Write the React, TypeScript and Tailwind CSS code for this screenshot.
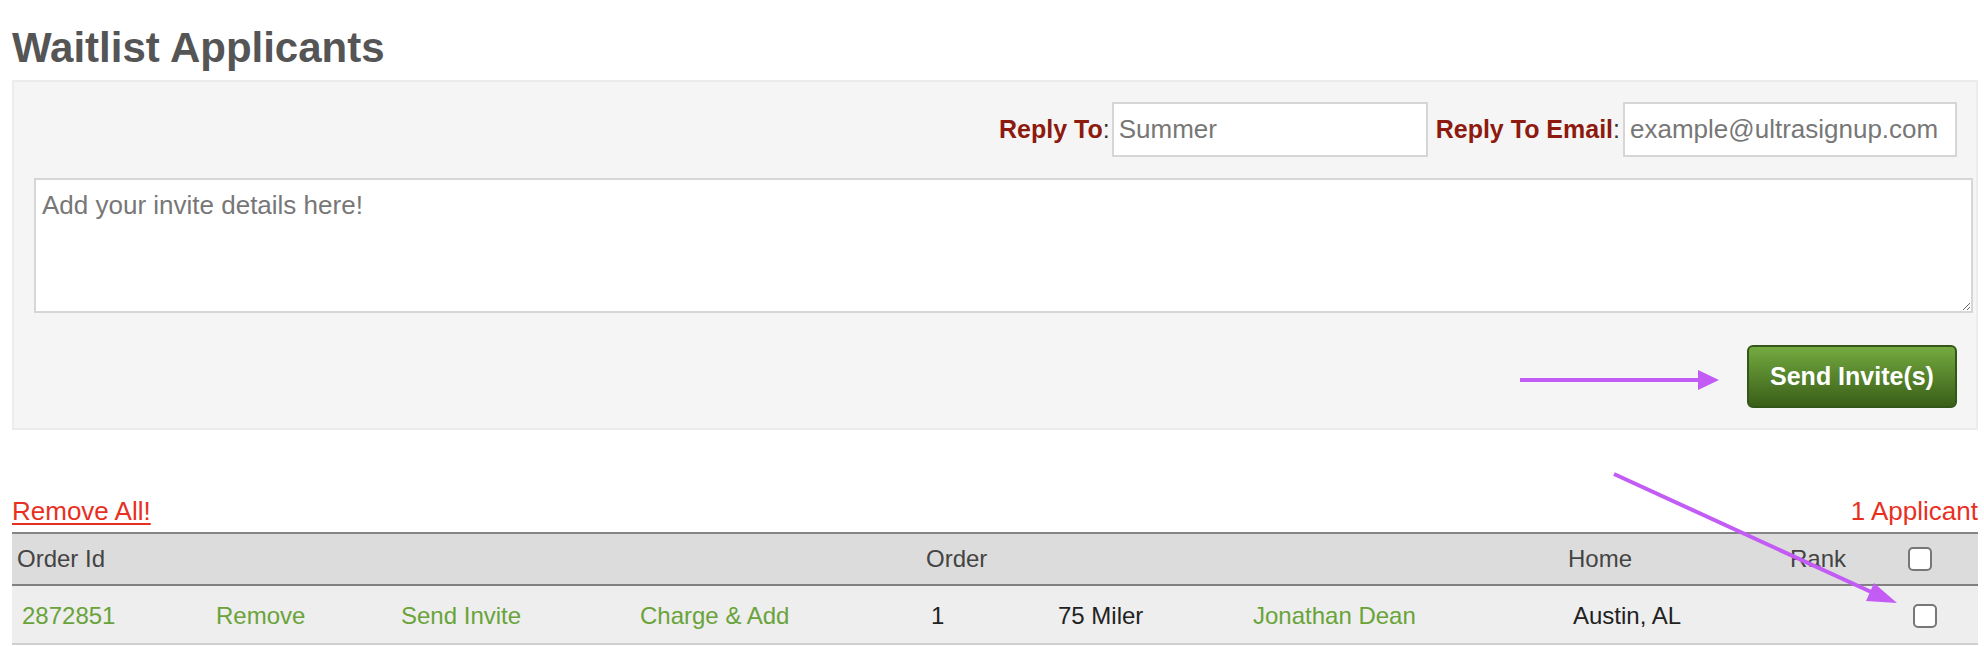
import React from "react";

type Cell = { text?: string; green?: boolean; check?: boolean };

const COLS =
  "grid grid-cols-[194px_185px_239px_291px_127px_195px_320px_222px_113px_1fr]";

const HEADER: Cell[] = [
  { text: "Order Id" },
  {},
  {},
  {},
  { text: "Order" },
  {},
  {},
  { text: "Home" },
  { text: "Rank" },
  { check: true },
];

const ROW: Cell[] = [
  { text: "2872851", green: true },
  { text: "Remove", green: true },
  { text: "Send Invite", green: true },
  { text: "Charge & Add", green: true },
  { text: "1" },
  { text: "75 Miler" },
  { text: "Jonathan Dean", green: true },
  { text: "Austin, AL" },
  {},
  { check: true },
];

function Box() {
  return (
    <input
      type="checkbox"
      className="block h-[24px] w-[24px] appearance-none rounded-[5px] border-2 border-[#777] bg-white"
    />
  );
}

export default function App() {
  return (
    <div className="relative min-h-screen bg-white font-['Liberation_Sans',Arial,sans-serif] text-[#333]">
      <div className="pl-3 pr-[6px] pt-[27px]">
        <h1 className="text-[42px] leading-[42px] font-bold text-[#555]">Waitlist Applicants</h1>

        <div className="mt-[11px] border-2 border-[#ececec] bg-[#f5f5f5] py-[20px]">
          <div className="flex items-center justify-end pr-[19px]">
            <label className="text-[25px] text-[#333]">
              <span className="font-bold text-[#8c1a0f]">Reply To</span>:
            </label>
            <input
              className="ml-[2px] h-[55px] w-[316px] border-2 border-[#d6d6d6] bg-white pl-[5px] text-[26px] outline-none placeholder:text-[#777]"
              placeholder="Summer"
            />
            <label className="ml-[8px] text-[25px] text-[#333]">
              <span className="font-bold text-[#8c1a0f]">Reply To Email</span>:
            </label>
            <input
              className="ml-[3px] h-[55px] w-[334px] border-2 border-[#d6d6d6] bg-white pl-[5px] text-[26px] outline-none placeholder:text-[#777]"
              placeholder="example@ultrasignup.com"
            />
          </div>

          <textarea
            className="mt-[21px] ml-[20px] block h-[135px] w-[1939px] border-2 border-[#d6d6d6] bg-white px-[6px] pt-[8px] text-[26px] leading-[34px] outline-none placeholder:text-[#777]"
            placeholder="Add your invite details here!"
          />

          <div className="mt-[32px] flex justify-end pr-[19px]">
            <button className="h-[63px] w-[210px] rounded-[6px] border-2 border-[#34561a] bg-linear-to-b from-[#74aa40] to-[#3a5f18] text-[25px] font-bold text-white">
              Send Invite(s)
            </button>
          </div>
        </div>

        <div className="mt-[65px] flex items-end justify-between text-[26px] leading-[32px] text-[#e8301f]">
          <a href="#" className="underline decoration-2 underline-offset-[3px]">
            Remove All!
          </a>
          <span>1 Applicant</span>
        </div>

        <div className="mt-[5px] border-t-2 border-[#858585] text-[24px]">
          <div className={`${COLS} h-[52px] items-center border-b-2 border-[#808080] bg-[#dcdcdc] text-[#444]`}>
            {HEADER.map((c, i) => (
              <div key={i} className={c.check ? "pl-[10px]" : "pl-[5px]"}>
                {c.check ? <Box /> : c.text}
              </div>
            ))}
          </div>
          <div className={`${COLS} h-[59px] items-center border-b-2 border-[#cfcfcf] bg-[#eeeeee] pt-[2px]`}>
            {ROW.map((c, i) => (
              <div
                key={i}
                className={
                  c.check ? "pl-[15px]" : c.green ? "pl-[10px] text-[#69a33a]" : "pl-[10px] text-[#222]"
                }
              >
                {c.check ? <Box /> : c.text}
              </div>
            ))}
          </div>
        </div>
      </div>

      {/* annotation arrows */}
      <svg
        className="pointer-events-none absolute top-0 left-0"
        width={1984}
        height={646}
        viewBox="0 0 1984 646"
      >
        <line x1={1520} y1={380} x2={1700} y2={380} stroke="#c35cf5" strokeWidth={4} />
        <polygon points="1698,370 1719,380 1698,390" fill="#c35cf5" />
        <line x1={1614} y1={474} x2={1880} y2={596} stroke="#c35cf5" strokeWidth={4} />
        <polygon points="1874,583 1897,603 1866,601" fill="#c35cf5" />
      </svg>
    </div>
  );
}
